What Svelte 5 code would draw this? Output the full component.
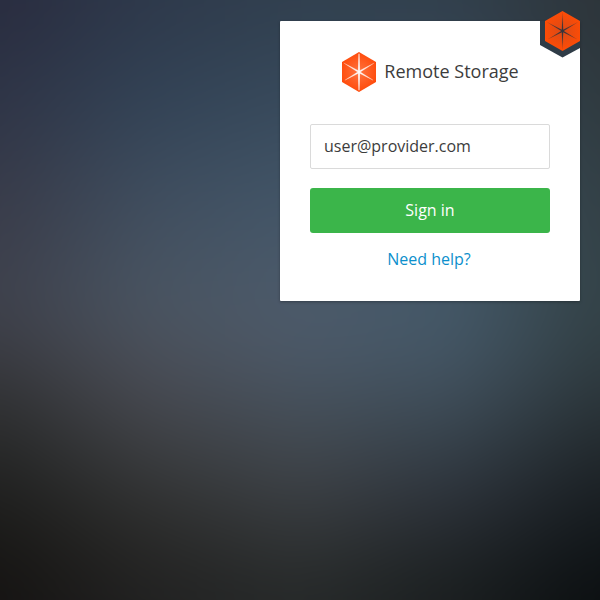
<script>
  const bleed = 90;
  const stops = [0, 150, 300, 450, 600];
  const mesh = [
    { y: 0, c: ['#292c3f', '#2e394b', '#31404f', '#32404d', '#2d3439'] },
    { y: 100, c: ['#2f3547', '#334356', '#384a5c', '#37495a', '#2f3a3f'] },
    { y: 200, c: ['#393c4a', '#404e5f', '#435668', '#405362', '#334046'] },
    { y: 300, c: ['#3f424d', '#4a5562', '#4d5b6b', '#445969', '#344348'] },
    { y: 350, c: ['#3b3c43', '#4b505a', '#4c5968', '#445665', '#313e43'] },
    { y: 400, c: ['#313234', '#46484f', '#46515c', '#3f4d59', '#2b353a'] },
    { y: 450, c: ['#272828', '#3c3e41', '#42484f', '#354049', '#22292d'] },
    { y: 500, c: ['#1f1f1e', '#313232', '#3a3e42', '#2d323a', '#191e22'] },
    { y: 550, c: ['#191816', '#282827', '#2f3233', '#22272a', '#111619'] },
    { y: 600, c: ['#151312', '#212121', '#262929', '#1a1e1f', '#0b0e10'] }
  ];
  const layers = mesh.map((row, i) => {
    const fill = row.c.map((c, k) => `${c} ${stops[k] + bleed}px`).join(', ');
    const mask = i
      ? `;mask-image:linear-gradient(180deg, transparent ${mesh[i - 1].y + bleed}px, #000 ${row.y + bleed}px)`
      : '';
    return `background-image:linear-gradient(90deg, ${fill})${mask}`;
  });
</script>

{#snippet cube(ray, tint)}
  <svg class="cube {tint}" viewBox="0 0 35 40" preserveAspectRatio="none" aria-hidden="true">
    <defs>
      <radialGradient id="glow-{tint}" gradientUnits="userSpaceOnUse" cx="17.5" cy="20" r="20">
        <stop offset="0" stop-color={tint === 'light' ? '#ff7440' : '#d94a17'} />
        <stop offset="1" stop-color={tint === 'light' ? '#ff4a0a' : '#ff4c05'} />
      </radialGradient>
      <radialGradient id="ray-{tint}" gradientUnits="userSpaceOnUse" cx="17.5" cy="20" r="19">
        <stop offset="0" stop-color={ray} />
        <stop offset=".6" stop-color={ray} stop-opacity=".75" />
        <stop offset="1" stop-color={ray} stop-opacity=".25" />
      </radialGradient>
    </defs>
    <path d="M17.5 0 35 10v20L17.5 40 0 30V10z" fill="url(#glow-{tint})" />
    {#if tint === 'light'}
      <path d="M16.5 2h2v36h-2z" fill="#fff" opacity=".35" />
    {/if}
    <path
      d="M17.5 1 18.2 18.8 33.2 11 18.7 20 32 28.2 18.2 21.2 17.5 39 16.8 21.2 3 28.2 16.3 20 1.8 11 16.8 18.8z"
      fill="url(#ray-{tint})"
      stroke="url(#ray-{tint})"
      stroke-width={tint === 'light' ? 0.5 : 0.1}
    />
  </svg>
{/snippet}

<main class="page">
  <div class="backdrop">
    {#each layers as style}
      <div class="layer" {style}></div>
    {/each}
  </div>

  <form class="card" onsubmit={(e) => e.preventDefault()}>
    <div class="badge">
      <svg class="notch" viewBox="0 0 40 37" aria-hidden="true">
        <path d="M0 0h40v27L22.5 36.5 0 24z" fill="#2f3c47" />
      </svg>
      <div class="mark">{@render cube('#30333c', 'dark')}</div>
    </div>
    <header>
      {@render cube('#ffffff', 'light')}
      <h1>Remote Storage</h1>
    </header>
    <input type="text" value="user@provider.com" aria-label="user@provider.com" />
    <button type="submit">Sign in</button>
    <a href="#help">Need help?</a>
  </form>
</main>

<style>
  .page {
    position: relative;
    width: 600px;
    height: 600px;
    overflow: hidden;
    box-sizing: border-box;
    padding: 21px 20px;
    display: flex;
    justify-content: flex-end;
    align-items: flex-start;
    font-family: 'Open Sans', sans-serif;
    color: #3c3c3c;
  }
  .backdrop {
    position: absolute;
    inset: -90px;
    filter: blur(30px);
  }
  .layer {
    position: absolute;
    inset: 0;
  }
  .card {
    position: relative;
    box-sizing: border-box;
    width: 300px;
    height: 280px;
    padding: 31px 30px 0;
    display: flex;
    flex-direction: column;
    align-items: center;
    background: #fff;
    border-radius: 1px;
    box-shadow: 0 1px 3px rgba(0, 0, 0, 0.3);
  }
  .badge {
    position: absolute;
    top: 0;
    right: 0;
    width: 40px;
    height: 37px;
  }
  .notch {
    display: block;
    width: 40px;
    height: 37px;
  }
  .mark {
    position: absolute;
    left: 5px;
    top: -10px;
  }
  .cube {
    display: block;
    width: 35px;
    height: 40px;
    flex: none;
  }
  .cube.light {
    width: 34px;
    margin-left: 1px;
  }
  header {
    display: flex;
    align-items: center;
    gap: 8px;
    height: 40px;
    margin-bottom: 32px;
  }
  h1 {
    margin: 0;
    padding-bottom: 2px;
    font-size: 18px;
    line-height: 38px;
    font-weight: 400;
    white-space: nowrap;
  }
  input,
  button {
    box-sizing: border-box;
    width: 240px;
    height: 45px;
    margin: 0;
    font: 400 16px/22px 'Open Sans', sans-serif;
    flex: none;
  }
  input {
    padding: 0 13px 2px;
    border: 1px solid #dadada;
    border-radius: 2px;
    background: #fff;
    color: #3c3c3c;
    outline: none;
  }
  button {
    margin-top: 19px;
    padding: 0 0 2px;
    border: 0;
    border-radius: 3px;
    background: #3bb54a;
    color: #fff;
  }
  a {
    margin: 15px 2px 0 0;
    font-size: 16px;
    line-height: 22px;
    color: #0c8fcc;
    text-decoration: none;
  }
</style>
